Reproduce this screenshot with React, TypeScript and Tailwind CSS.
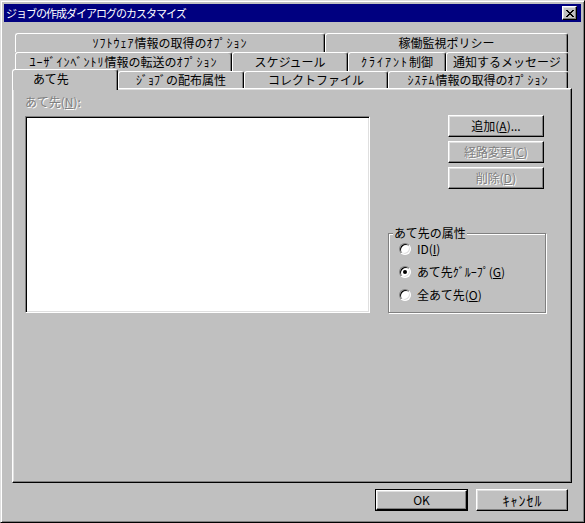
import type { ReactNode } from 'react';

const raised =
  'bg-[#c0c0c0] border border-t-white border-l-white border-r-black border-b-black shadow-[inset_-1px_-1px_0_#808080,inset_1px_1px_0_#dfdfdf]';

const H1 = ({ children }: { children: ReactNode }) => <span className="tracking-[1px]">{children}</span>;

const row1 = [
  {
    id: 'sw',
    label: (
      <>
        <H1>ｿﾌﾄｳｪｱ</H1>情報の取得の<H1>ｵﾌﾟｼｮﾝ</H1>
      </>
    ),
    w: 'w-[310px]',
  },
  { id: 'policy', label: '稼働監視ポリシー', w: 'w-[243px]' },
];

const row2 = [
  {
    id: 'inv',
    label: (
      <>
        <H1>ﾕｰｻﾞｲﾝﾍﾞﾝﾄﾘ</H1>情報の転送の<H1>ｵﾌﾟｼｮﾝ</H1>
      </>
    ),
    w: 'w-[217px]',
  },
  { id: 'sched', label: 'スケジュール', w: 'w-[116px]' },
  {
    id: 'client',
    label: (
      <>
        <span className="tracking-[2px]">ｸﾗｲｱﾝﾄ</span>制御
      </>
    ),
    w: 'w-[98px]',
  },
  { id: 'msg', label: '通知するメッセージ', w: 'w-[122px]' },
];

const row3 = [
  { id: 'attr', label: 'ｼﾞｮﾌﾞの配布属性', w: 'w-[126px]' },
  { id: 'collect', label: 'コレクトファイル', w: 'w-[144px]' },
  {
    id: 'sys',
    label: (
      <>
        <H1>ｼｽﾃﾑ</H1>情報の取得の<H1>ｵﾌﾟｼｮﾝ</H1>
      </>
    ),
    w: 'w-[180px]',
  },
];

function Tab({ label, w }: { label: ReactNode; w: string }) {
  return (
    <div
      className={`${w} h-full shrink-0 flex items-center justify-center border-t border-l border-r border-t-white border-l-white border-r-black rounded-t-[3px] shadow-[inset_-1px_0_0_#808080] text-[12px] leading-[14px] text-black whitespace-nowrap`}
    >
      {label}
    </div>
  );
}

function Button({ children, disabled }: { children: ReactNode; disabled?: boolean }) {
  return (
    <div
      className={`${raised} h-[22px] flex items-center justify-center text-[12px] leading-[14px] whitespace-nowrap ${
        disabled ? 'text-[#808080] [text-shadow:1px_1px_0_#fff]' : 'text-black'
      }`}
    >
      {children}
    </div>
  );
}

function Radio({ checked, children }: { checked?: boolean; children: ReactNode }) {
  return (
    <div className="h-[14px] flex items-center gap-[6px] text-[12px] leading-[14px] text-black">
      <div className="w-[12px] h-[12px] rounded-full bg-white border border-t-[#808080] border-l-[#808080] border-r-white border-b-white shadow-[inset_1px_1px_0_#000,inset_-1px_-1px_0_#dfdfdf] flex items-center justify-center">
        {checked && <div className="w-[4px] h-[4px] rounded-full bg-black" />}
      </div>
      <span className="whitespace-nowrap">{children}</span>
    </div>
  );
}

function CloseGlyph() {
  const cells = [
    [0, 0], [1, 0], [6, 0], [7, 0],
    [1, 1], [2, 1], [5, 1], [6, 1],
    [2, 2], [3, 2], [4, 2], [5, 2],
    [3, 3], [4, 3],
    [2, 4], [3, 4], [4, 4], [5, 4],
    [1, 5], [2, 5], [5, 5], [6, 5],
    [0, 6], [1, 6], [6, 6], [7, 6],
  ];
  return (
    <svg width="8" height="7" viewBox="0 0 8 7" shapeRendering="crispEdges">
      {cells.map(([x, y]) => (
        <rect key={`${x}-${y}`} x={x} y={y} width="1" height="1" fill="#000" />
      ))}
    </svg>
  );
}

export default function App() {
  return (
    <div className="w-[585px] h-[523px] bg-[#c0c0c0] border border-t-[#dfdfdf] border-l-[#dfdfdf] border-r-black border-b-black shadow-[inset_1px_1px_0_#fff,inset_-1px_-1px_0_#808080] p-[3px] flex flex-col font-['Noto_Sans_CJK_JP',sans-serif] select-none">
      {/* title bar */}
      <div className="h-[18px] bg-[#000080] flex items-center justify-between pl-[2px] pr-[4px]">
        <span className="text-white text-[11px] leading-[14px] tracking-[-1px] whitespace-nowrap">
          ジョブの作成ダイアログのカスタマイズ
        </span>
        <div className={`${raised} w-[15px] h-[14px] flex items-center justify-center`}>
          <CloseGlyph />
        </div>
      </div>

      {/* tab control */}
      <div className="mt-[11px] ml-[8px] w-[560px] flex flex-col">
        <div className="flex ml-[3px] h-[19px]">
          {row1.map((t) => (
            <Tab key={t.id} label={t.label} w={t.w} />
          ))}
        </div>
        <div className="flex ml-[3px] h-[19px]">
          {row2.map((t) => (
            <Tab key={t.id} label={t.label} w={t.w} />
          ))}
        </div>
        <div className="flex items-end h-[17px]">
          <div className="relative z-10 w-[106px] h-[21px] mb-[-2px] shrink-0 bg-[#c0c0c0] flex items-center pl-[20px] pb-[2px] border-t border-l border-r border-t-white border-l-white border-r-black rounded-t-[3px] shadow-[inset_-1px_0_0_#808080] text-[12px] leading-[14px] text-black">
            あて先
          </div>
          <div className="flex h-full">
            {row3.map((t) => (
              <Tab key={t.id} label={t.label} w={t.w} />
            ))}
          </div>
        </div>

        {/* panel */}
        <div className="h-[395px] w-[560px] border border-t-white border-l-white border-r-black border-b-black shadow-[inset_-1px_-1px_0_#808080,inset_1px_1px_0_#dfdfdf] flex pl-[12px] pt-[6px]">
          <div className="flex flex-col">
            <div className="h-[13px] leading-[13px] text-[12px] text-[#808080] [text-shadow:1px_1px_0_#fff]">
              あて先(<u>N</u>):
            </div>
            <div className="mt-[8px] w-[345px] h-[197px] bg-white border border-t-[#808080] border-l-[#808080] border-r-white border-b-white shadow-[inset_1px_1px_0_#000,inset_-1px_-1px_0_#dfdfdf]" />
          </div>

          <div className="ml-[18px] w-[158px] flex flex-col pt-[20px]">
            <div className="self-end mr-[2px] w-[96px] flex flex-col gap-[4px]">
              <Button>
                追加(<u>A</u>)...
              </Button>
              <Button disabled>
                経路変更(<u>C</u>)
              </Button>
              <Button disabled>
                削除(<u>D</u>)
              </Button>
            </div>

            <div className="relative mt-[44px] h-[80px] w-[158px] border border-[#808080] shadow-[inset_1px_1px_0_#fff,1px_1px_0_#fff] flex flex-col pt-[8px] pl-[10px] gap-[9px]">
              <span className="absolute left-[4px] -top-[8px] bg-[#c0c0c0] px-[1px] text-[12px] leading-[14px] text-black whitespace-nowrap">
                あて先の属性
              </span>
              <Radio>
                ID(<u>I</u>)
              </Radio>
              <Radio checked>
                あて先ｸﾞﾙｰﾌﾟ(<u>G</u>)
              </Radio>
              <Radio>
                全あて先(<u>O</u>)
              </Radio>
            </div>
          </div>
        </div>

        {/* dialog buttons */}
        <div className="mt-[6px] pr-[4px] flex justify-end gap-[8px]">
          <div className="w-[93px] h-[22px] border border-black">
            <div className={`${raised} h-full flex items-center justify-center text-[12px] leading-[14px] text-black`}>
              OK
            </div>
          </div>
          <div className="w-[92px]">
            <Button>
              <span className="text-[14px] tracking-[1px] -mr-[1px]">ｷｬﾝｾﾙ</span>
            </Button>
          </div>
        </div>
      </div>
    </div>
  );
}
